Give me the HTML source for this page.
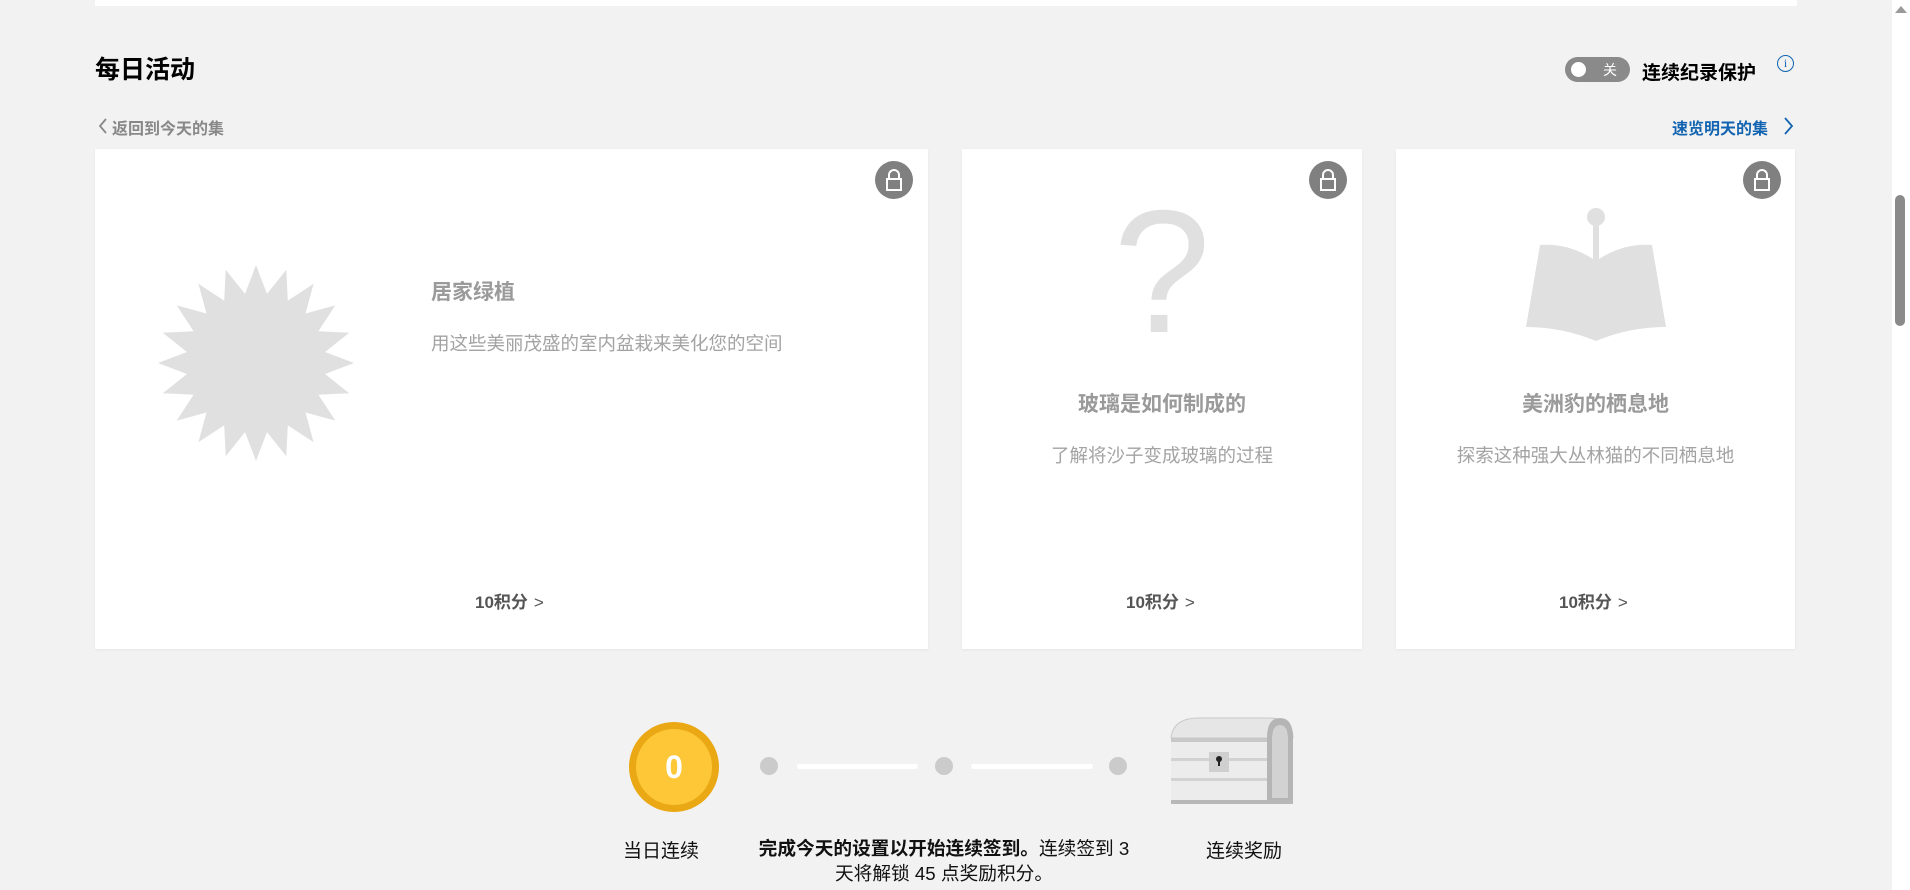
<!DOCTYPE html>
<html><head><meta charset="utf-8">
<style>
*{margin:0;padding:0;box-sizing:border-box}
body{width:1910px;height:890px;background:#f2f2f2;position:relative;overflow:hidden;font-family:"Liberation Sans","Noto Sans CJK SC",sans-serif}
.abs{position:absolute}
.card{position:absolute;top:149px;height:500px;background:#fff;box-shadow:0 1px 3px rgba(0,0,0,.06)}
.lock{position:absolute;top:161px;width:38px;height:38px;border-radius:50%;background:#808080}
.ctitle{position:absolute;font-size:21px;font-weight:bold;color:#9a9a9a;white-space:nowrap}
.cdesc{position:absolute;font-size:18.5px;color:#a3a3a3;white-space:nowrap}
.pts{position:absolute;top:588px;font-size:17px;font-weight:bold;color:#555;white-space:nowrap}
.pts span{font-weight:normal;margin-left:6px}
.dot{position:absolute;top:757px;width:18px;height:18px;border-radius:50%;background:#cbcbcb}
.line{position:absolute;top:764px;height:5px;border-radius:3px;background:#fff}
.lbl{position:absolute;font-size:19px;color:#111;white-space:nowrap}
</style></head><body>
<div class="abs" style="left:95px;top:0;width:1702px;height:6px;background:#fff"></div>
<div class="abs" style="left:1892px;top:0;width:18px;height:890px;background:#fff"></div>
<div class="abs" style="left:1895px;top:195px;width:10px;height:131px;border-radius:5px;background:#8a8a8a"></div>
<div class="abs" style="left:1895px;top:6px;width:0;height:0;border-left:6px solid transparent;border-right:6px solid transparent;border-bottom:7px solid #999"></div>

<div class="abs" style="left:95px;top:50px;font-size:25px;font-weight:bold;color:#000">每日活动</div>

<div class="abs" style="left:1565px;top:57px;width:65px;height:25px;border-radius:13px;background:#8a8a8a">
  <div class="abs" style="left:6px;top:5px;width:15px;height:15px;border-radius:50%;background:#fff"></div>
  <div class="abs" style="left:38px;top:3px;font-size:14px;color:#fff">关</div>
</div>
<div class="abs" style="left:1642px;top:58px;font-size:19px;font-weight:bold;color:#000">连续纪录保护</div>
<div class="abs" style="left:1777px;top:55px;width:17px;height:17px;border-radius:50%;border:1.5px solid #1264b0;color:#1264b0;font-size:12px;line-height:14px;text-align:center;font-family:'Liberation Serif',serif">i</div>

<svg class="abs" style="left:97px;top:117px" width="12" height="18"><path d="M9 2 L3 9 L9 16" stroke="#888" stroke-width="1.8" fill="none"/></svg>
<div class="abs" style="left:112px;top:115px;font-size:16px;font-weight:bold;color:#888">返回到今天的集</div>
<div class="abs" style="left:1672px;top:115px;font-size:16px;font-weight:bold;color:#1264b0">速览明天的集</div>
<svg class="abs" style="left:1782px;top:116px" width="12" height="20"><path d="M3 2 L10 10 L3 18" stroke="#1264b0" stroke-width="1.8" fill="none"/></svg>

<!-- card1 -->
<div class="card" style="left:95px;width:833px"></div>
<svg class="abs" style="left:156px;top:263px" width="200" height="200"><polygon id="sun" fill="#e0e0e0"/></svg>
<div class="ctitle" style="left:431px;top:276px">居家绿植</div>
<div class="cdesc" style="left:431px;top:330px">用这些美丽茂盛的室内盆栽来美化您的空间</div>
<div class="pts" style="left:475px">10积分<span>&gt;</span></div>

<!-- card2 -->
<div class="card" style="left:962px;width:400px"></div>
<div class="abs" style="left:1082px;top:188px;width:160px;text-align:center;font-size:175px;font-weight:normal;color:#e0e0e0;line-height:170px">?</div>
<div class="ctitle" style="left:962px;width:400px;text-align:center;top:388px">玻璃是如何制成的</div>
<div class="cdesc" style="left:962px;width:400px;text-align:center;top:442px">了解将沙子变成玻璃的过程</div>
<div class="pts" style="left:1126px">10积分<span>&gt;</span></div>

<!-- card3 -->
<div class="card" style="left:1396px;width:399px"></div>
<svg class="abs" style="left:1520px;top:205px" width="160" height="140">
<circle cx="76" cy="12" r="9" fill="#e0e0e0"/>
<rect x="73" y="12" width="6" height="50" fill="#e0e0e0"/>
<path d="M20 40 Q50 38 76 56 Q102 38 132 40 L146 122 Q110 122 76 136 Q42 122 6 122 Z" fill="#e0e0e0"/>
</svg>
<div class="ctitle" style="left:1396px;width:399px;text-align:center;top:388px">美洲豹的栖息地</div>
<div class="cdesc" style="left:1396px;width:399px;text-align:center;top:442px">探索这种强大丛林猫的不同栖息地</div>
<div class="pts" style="left:1559px">10积分<span>&gt;</span></div>

<!-- locks -->
<div class="lock" style="left:875px"></div>
<div class="lock" style="left:1309px"></div>
<div class="lock" style="left:1743px"></div>
<svg class="abs" style="left:875px;top:161px" width="38" height="38"><path d="M14 18 V14 a5 5 0 0 1 10 0 V18" stroke="#fff" stroke-width="2" fill="none"/><rect x="12" y="18" width="14" height="11" stroke="#fff" stroke-width="2" fill="none"/></svg>
<svg class="abs" style="left:1309px;top:161px" width="38" height="38"><path d="M14 18 V14 a5 5 0 0 1 10 0 V18" stroke="#fff" stroke-width="2" fill="none"/><rect x="12" y="18" width="14" height="11" stroke="#fff" stroke-width="2" fill="none"/></svg>
<svg class="abs" style="left:1743px;top:161px" width="38" height="38"><path d="M14 18 V14 a5 5 0 0 1 10 0 V18" stroke="#fff" stroke-width="2" fill="none"/><rect x="12" y="18" width="14" height="11" stroke="#fff" stroke-width="2" fill="none"/></svg>

<!-- streak -->
<div class="abs" style="left:629px;top:722px;width:90px;height:90px;border-radius:50%;background:#e9a814"></div>
<div class="abs" style="left:636px;top:729px;width:76px;height:76px;border-radius:50%;background:#fdc738;color:#fff;font-size:32px;font-weight:bold;text-align:center;line-height:76px">0</div>
<div class="dot" style="left:760px"></div>
<div class="line" style="left:797px;width:121px"></div>
<div class="dot" style="left:935px"></div>
<div class="line" style="left:971px;width:122px"></div>
<div class="dot" style="left:1109px"></div>
<svg class="abs" style="left:1169px;top:716px" width="126" height="90">
<path d="M2 22 Q4 2 30 2 L100 2 Q124 2 124 22 Z" fill="#e6e6e6" stroke="#c8c8c8"/>
<rect x="2" y="22" width="122" height="66" fill="#ececec"/>
<path d="M98 22 Q98 2 111 2 Q124 2 124 22 V88 H98 Z" fill="#b5b5b5"/>
<path d="M103 24 Q103 9 111 9 Q119 9 119 24 V82 H103 Z" fill="#d2d2d2"/>
<rect x="2" y="22" width="96" height="4" fill="#c8c8c8"/>
<rect x="2" y="42" width="96" height="3" fill="#d2d2d2"/>
<rect x="2" y="62" width="96" height="3" fill="#d2d2d2"/>
<rect x="2" y="84" width="122" height="4" fill="#b8b8b8"/>
<rect x="40" y="36" width="20" height="20" fill="#cfcfcf"/>
<circle cx="50" cy="43" r="3" fill="#222"/><rect x="49" y="43" width="2" height="7" fill="#222"/>
</svg>
<div class="lbl" style="left:623px;top:836px">当日连续</div>
<div class="lbl" style="left:744px;width:400px;text-align:center;top:836px;font-size:18.7px;line-height:25px"><b>完成今天的设置以开始连续签到。</b>连续签到 3<br>天将解锁 45 点奖励积分。</div>
<div class="lbl" style="left:1206px;top:836px">连续奖励</div>

<script>
var p=[],n=20,cx=100,cy=100,R=98,r=70;
for(var i=0;i<n*2;i++){var a=Math.PI*i/n-Math.PI/2,rr=i%2?r:R;p.push((cx+rr*Math.cos(a)).toFixed(1)+","+(cy+rr*Math.sin(a)).toFixed(1));}
document.getElementById("sun").setAttribute("points",p.join(" "));
</script>
</body></html>
